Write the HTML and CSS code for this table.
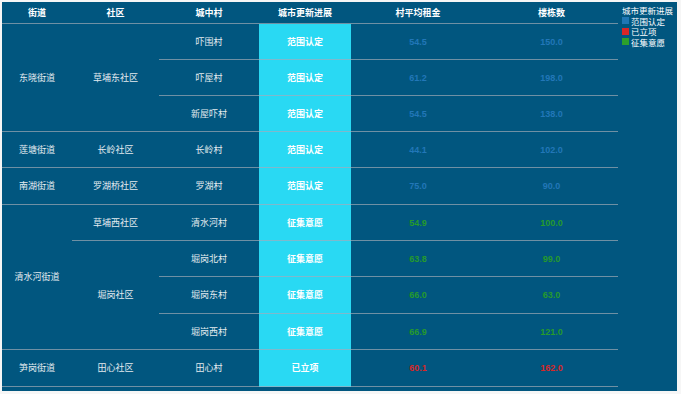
FILE: index.html
```html
<!DOCTYPE html>
<html lang="zh">
<head>
<meta charset="utf-8">
<title>城市更新进展</title>
<link rel="stylesheet" href="styles.css">
</head>
<body>
<div class="panel">
  <table class="grid">
    <thead>
      <tr class="head">
        <th class="c1">街道</th>
        <th class="c2">社区</th>
        <th class="c3">城中村</th>
        <th class="c4">城市更新进展</th>
        <th class="c5">村平均租金</th>
        <th class="c6">楼栋数</th>
      </tr>
    </thead>
    <tbody>
      <tr class="r36">
        <td rowspan="3">东晓街道</td>
        <td rowspan="3">草埔东社区</td>
        <td>吓围村</td>
        <td class="st">范围认定</td>
        <td class="num blue">54.5</td>
        <td class="num blue">150.0</td>
      </tr>
      <tr class="r36">
        <td>吓屋村</td>
        <td class="st">范围认定</td>
        <td class="num blue">61.2</td>
        <td class="num blue">198.0</td>
      </tr>
      <tr class="r36">
        <td>新屋吓村</td>
        <td class="st">范围认定</td>
        <td class="num blue">54.5</td>
        <td class="num blue">138.0</td>
      </tr>
      <tr class="r36">
        <td>莲塘街道</td>
        <td>长岭社区</td>
        <td>长岭村</td>
        <td class="st">范围认定</td>
        <td class="num blue">44.1</td>
        <td class="num blue">102.0</td>
      </tr>
      <tr class="r37">
        <td>南湖街道</td>
        <td>罗湖桥社区</td>
        <td>罗湖村</td>
        <td class="st">范围认定</td>
        <td class="num blue">75.0</td>
        <td class="num blue">90.0</td>
      </tr>
      <tr class="r36">
        <td rowspan="4">清水河街道</td>
        <td>草埔西社区</td>
        <td>清水河村</td>
        <td class="st">征集意愿</td>
        <td class="num green">54.9</td>
        <td class="num green">100.0</td>
      </tr>
      <tr class="r36">
        <td rowspan="3">堀岗社区</td>
        <td>堀岗北村</td>
        <td class="st">征集意愿</td>
        <td class="num green">63.8</td>
        <td class="num green">99.0</td>
      </tr>
      <tr class="r37">
        <td>堀岗东村</td>
        <td class="st">征集意愿</td>
        <td class="num green">66.0</td>
        <td class="num green">63.0</td>
      </tr>
      <tr class="r36">
        <td>堀岗西村</td>
        <td class="st">征集意愿</td>
        <td class="num green">66.9</td>
        <td class="num green">121.0</td>
      </tr>
      <tr class="r37">
        <td>笋岗街道</td>
        <td>田心社区</td>
        <td>田心村</td>
        <td class="st">已立项</td>
        <td class="num red">60.1</td>
        <td class="num red">162.0</td>
      </tr>
    </tbody>
  </table>
  <div class="legend">
    <div class="legend-title">城市更新进展</div>
    <div class="legend-item"><span class="sw sw-blue"></span>范围认定</div>
    <div class="legend-item"><span class="sw sw-red"></span>已立项</div>
    <div class="legend-item"><span class="sw sw-green"></span>征集意愿</div>
  </div>
</div>
</body>
</html>
```

FILE: styles.css
```css
html, body {
  margin: 0;
  padding: 0;
  background: #f6f6f6;
}

.panel {
  margin: 2px;
  width: 675px;
  height: 389px;
  background: #01567f;
  display: flex;
  align-items: flex-start;
  font-family: "Noto Sans CJK SC", "Liberation Sans", sans-serif;
  color: #e4ebef;
}

.grid {
  width: 616px;
  border-collapse: separate;
  border-spacing: 0;
  table-layout: fixed;
  flex: none;
}

.grid th,
.grid td {
  padding: 0;
  text-align: center;
  vertical-align: middle;
  font-size: 9px;
  line-height: 12px;
  border-bottom: 1px solid #6f90a4;
}

.grid th {
  height: 21px;
  color: #ffffff;
  font-weight: bold;
}

.c1 { width: 70px; }
.c2 { width: 87px; }
.c3 { width: 100px; }
.c4 { width: 92px; }
.c5 { width: 134px; }
.c6 { width: 133px; }

.r36 td { height: 35px; }
.r37 td { height: 36px; }

.grid td.st {
  background: #29d9f3;
  color: #ffffff;
  font-weight: bold;
  border-bottom-color: #7fb9cc;
}

.grid td.num {
  font-family: "Liberation Sans", Arial, sans-serif;
  font-weight: bold;
  font-size: 9px;
}

.blue { color: #2277b8; }
.green { color: #259a2c; }
.red { color: #d62728; }

.legend {
  margin-left: 4px;
  padding-top: 3px;
  font-family: "Noto Sans CJK SC", serif;
  font-size: 8.5px;
  line-height: 10.5px;
  color: #ffffff;
}

.legend-item {
  display: flex;
  align-items: center;
  gap: 2px;
}

.sw {
  display: inline-block;
  width: 7px;
  height: 7px;
}

.sw-blue { background: #1f77b4; }
.sw-red { background: #d62728; }
.sw-green { background: #2ca02c; }
```
